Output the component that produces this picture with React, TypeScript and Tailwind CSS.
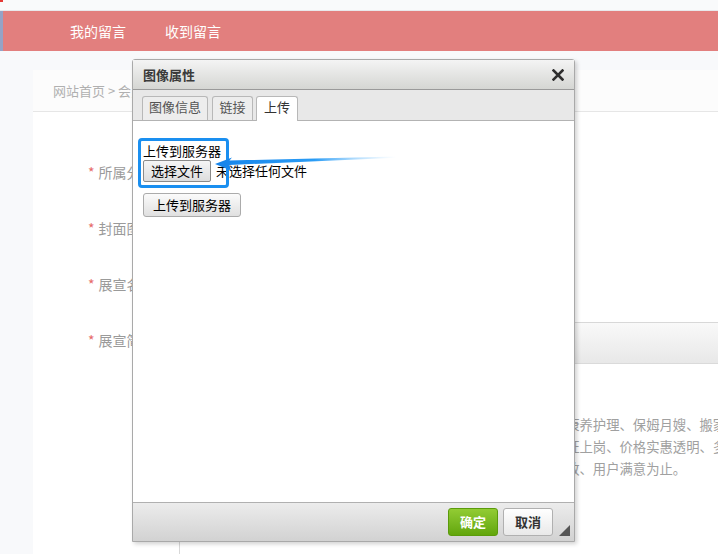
export default function App() {
  const labels = ["所属分类", "封面图片", "展宣名称"];
  return (
    <div className="relative w-[718px] h-[554px] overflow-hidden bg-[#f8f9fb] font-['Noto_Sans_CJK_SC','Liberation_Sans',sans-serif]">
      {/* top strip */}
      <div className="relative h-[11px] bg-[#f9fafb] border-b border-[#e8e9ec]">
        <div className="absolute left-0 top-0 w-[3px] h-[2px] bg-[#e53935]" />
      </div>
      {/* nav */}
      <nav className="h-[40px] bg-[#e27f7e] border-l-[3px] border-[#95a3c6] flex items-center pl-[67px] gap-[39px] text-[14px] leading-[20px] text-white">
        <span>我的留言</span>
        <span>收到留言</span>
      </nav>
      {/* body */}
      <div className="flex h-[503px]">
        <div className="w-[33px] shrink-0" />
        <div className="flex-1 mt-[19px] bg-white overflow-hidden">
          <div className="h-[42px] bg-[#fcfcfc] border-b border-[#e6e6e6] pl-[20px] flex items-center text-[13px] leading-[18px] text-[#b0b0b0]">
            网站首页 &gt; 会员中心
          </div>
          <div className="pt-[32px]">
            {labels.map((l) => (
              <div key={l} className="h-[56px] flex items-center">
                <div className="w-[146px] shrink-0 pl-[55px] text-[14px] leading-[20px] text-[#9a9a9a]">
                  <span className="text-[#e66a6a]">*</span>
                  <span className="ml-[4px]">{l}</span>
                </div>
                <div className="w-[300px] h-[32px] border border-[#dcdcdc] rounded-[2px]" />
              </div>
            ))}
            <div className="flex items-start pt-[10px]">
              <div className="w-[146px] shrink-0 mt-[8px] pl-[55px] text-[14px] leading-[20px] text-[#9a9a9a]">
                <span className="text-[#e66a6a]">*</span>
                <span className="ml-[4px]">展宣简介</span>
              </div>
              <div className="flex-1 h-[260px] border-l border-t border-[#d8d8d8] overflow-hidden">
                <div className="h-[41px] border-b border-[#dadada] bg-gradient-to-b from-[#f9f9f9] to-[#e8e8e8]" />
                <div className="pl-[13px] pt-[18px] text-[13.33px] leading-[22px] text-[#a0a0a0] whitespace-nowrap">
                  <div>公司简介：专业家政服务平台</div>
                  <div className="mt-[10px]">本公司专业提供家政服务，涵盖日常保洁、家电清洗、老年人的康养护理、保姆月嫂、搬家保洁等服务</div>
                  <div>全体服务人员均经过专业培训和严格背景审核，上门人员均需持证上岗、价格实惠透明、多种套餐可选</div>
                  <div>我们坚持以客户为中心，用心做好每一次服务，力求服务周到细致、用户满意为止。</div>
                </div>
              </div>
            </div>
          </div>
        </div>
      </div>

      {/* dialog */}
      <div className="absolute left-[132px] top-[59px] w-[443px] h-[483px] border border-[#a9a9a9] rounded-t-[3px] bg-white flex flex-col shadow-[2px_2px_4px_rgba(0,0,0,0.18)] text-[13px]">
        <div className="h-[30px] shrink-0 border-b border-[#9a9a9a] bg-gradient-to-b from-[#f4f4f4] to-[#d5d6d3] flex items-center justify-between pl-[10px] pr-[10px]">
          <span className="font-bold text-[#3a3a3a] text-[13px] leading-[18px]">图像属性</span>
          <svg width="12" height="12" viewBox="0 0 12 12">
            <path d="M1.5 1.5 L10.5 10.5 M10.5 1.5 L1.5 10.5" stroke="#2e2e2e" strokeWidth="2.6" strokeLinecap="square" />
          </svg>
        </div>
        <div className="h-[31px] shrink-0 bg-[#e8e8e8] border-b border-[#b3b3b3] flex items-end pl-[9px] text-[13px] leading-[18px]">
          <div className="h-[24px] w-[66px] pb-[3px] border border-b-0 border-[#b8b8b8] rounded-t-[3px] bg-[#ededed] text-[#555] flex items-center justify-center">图像信息</div>
          <div className="ml-[4px] h-[24px] w-[41px] pb-[3px] border border-b-0 border-[#b8b8b8] rounded-t-[3px] bg-[#ededed] text-[#555] flex items-center justify-center">链接</div>
          <div className="ml-[3px] h-[25px] w-[42px] pb-[4px] -mb-px border border-b-0 border-[#b8b8b8] rounded-t-[3px] bg-white text-[#333] flex items-center justify-center">上传</div>
        </div>
        <div className="flex-1 pl-[10px] pt-[22px] text-black text-[13px] leading-[16px]">
          <div>上传到服务器</div>
          <div className="mt-[1px] flex items-center">
            <div className="h-[22px] px-[7px] border border-[#8a8a8a] rounded-[2px] bg-gradient-to-b from-[#f5f5f5] to-[#dddddd] flex items-center">选择文件</div>
            <span className="ml-[5px]">未选择任何文件</span>
          </div>
          <div className="mt-[11px] w-[98px] h-[24px] border border-[#ababab] rounded-[3px] bg-gradient-to-b from-[#fbfbfb] to-[#e0e0e0] flex items-center justify-center">上传到服务器</div>
        </div>
        <div className="relative h-[39px] shrink-0 border-t border-[#b0b0b0] bg-gradient-to-b from-[#ececec] to-[#d2d2d2] flex justify-end items-start pt-[5px] pr-[21px] gap-[5px] text-[13px] leading-[18px] font-bold">
          <div className="w-[50px] h-[28px] rounded-[3px] border border-[#5b9b0b] bg-gradient-to-b from-[#92cc33] to-[#62a60a] text-white flex items-center justify-center">确定</div>
          <div className="w-[50px] h-[28px] rounded-[3px] border border-[#b0b0b0] bg-gradient-to-b from-white to-[#e9e9e9] text-[#333] flex items-center justify-center">取消</div>
          <svg className="absolute right-[4px] bottom-[5px]" width="11" height="11" viewBox="0 0 11 11">
            <polygon points="11,0 11,11 0,11" fill="#555" />
          </svg>
        </div>
      </div>

      {/* annotation */}
      <div className="absolute left-[138px] top-[138px] w-[91px] h-[50px] border-[3px] border-[#1a8ff0] rounded-[4px]" />
      <svg className="absolute left-[210px] top-[150px]" width="190" height="26" viewBox="0 0 190 26">
        <defs>
          <linearGradient id="arw" gradientUnits="userSpaceOnUse" x1="5" y1="0" x2="186" y2="0">
            <stop offset="0" stopColor="#1684ea" />
            <stop offset="0.55" stopColor="#2a9cf5" />
            <stop offset="1" stopColor="#9ad4ff" stopOpacity="0" />
          </linearGradient>
        </defs>
        <polygon points="5,14 22,7.5 19.5,10.5 186,6.5 186,7.8 19.5,15 21,20.5" fill="url(#arw)" />
      </svg>
    </div>
  );
}
